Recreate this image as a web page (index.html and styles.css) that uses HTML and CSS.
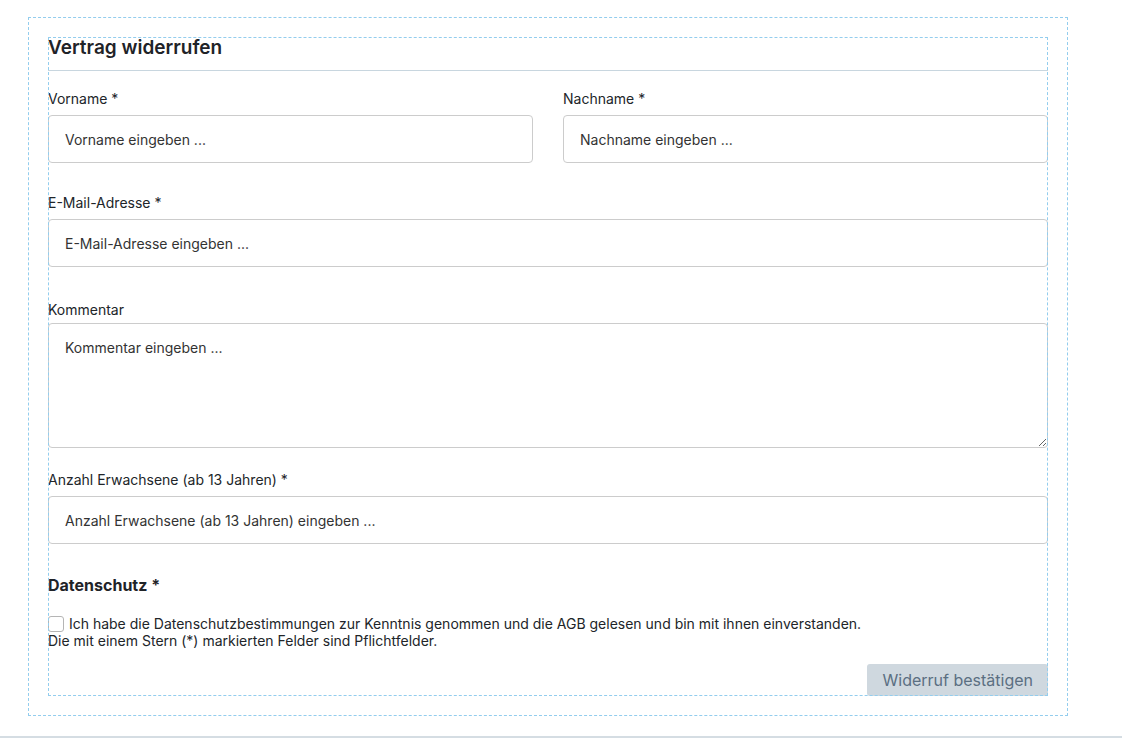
FILE: index.html
```html
<!DOCTYPE html>
<html lang="de">
<head>
<meta charset="utf-8">
<title>Vertrag widerrufen</title>
<link rel="stylesheet" href="styles.css">
</head>
<body>
<div class="outer">
  <form class="card">
    <h2 class="title">Vertrag widerrufen</h2>
    <div class="row">
      <div class="field">
        <label class="label">Vorname *</label>
        <input class="input" type="text" placeholder="Vorname eingeben ...">
      </div>
      <div class="field">
        <label class="label">Nachname *</label>
        <input class="input" type="text" placeholder="Nachname eingeben ...">
      </div>
    </div>
    <div class="field block">
      <label class="label">E-Mail-Adresse *</label>
      <input class="input" type="email" placeholder="E-Mail-Adresse eingeben ...">
    </div>
    <div class="field block comment">
      <label class="label">Kommentar</label>
      <textarea class="textarea" placeholder="Kommentar eingeben ..."></textarea>
    </div>
    <div class="field block adults">
      <label class="label">Anzahl Erwachsene (ab 13 Jahren) *</label>
      <input class="input" type="text" placeholder="Anzahl Erwachsene (ab 13 Jahren) eingeben ...">
    </div>
    <h3 class="subtitle">Datenschutz *</h3>
    <p class="consent"><input class="check" type="checkbox"> Ich habe die Datenschutzbestimmungen zur Kenntnis genommen und die AGB gelesen und bin mit ihnen einverstanden.<br>Die mit einem Stern (*) markierten Felder sind Pflichtfelder.</p>
    <div class="actions">
      <button class="btn" type="button">Widerruf bestätigen</button>
    </div>
  </form>
</div>
<div class="footer"></div>
</body>
</html>
```

FILE: styles.css
```css
* { box-sizing: border-box; }
html, body { margin: 0; padding: 0; }
body {
  font-family: Inter, "Noto Sans", sans-serif;
  color: #212529;
  background: #fff;
  padding-top: 17px;
  height: 738px;
  overflow: hidden;
}
.outer {
  margin-left: 28px;
  width: 1040px;
  padding: 20px;
  outline: 1px dashed #93cdee;
  outline-offset: -1px;
}
.card {
  width: 1000px;
  margin: 0;
  outline: 1px dashed #93cdee;
  outline-offset: -1px;
}
.title {
  margin: 0;
  font-size: 19px;
  font-weight: 600;
  line-height: 22px;
  color: #1f2328;
  padding-bottom: 11px;
  border-bottom: 1px solid #c8d6df;
}
.row {
  display: flex;
  gap: 30px;
  margin-top: 18px;
}
.row .field { flex: 1; }
.field { display: flex; flex-direction: column; }
.block { margin-top: 30px; }
.label {
  font-size: 14px;
  line-height: 20px;
  margin-bottom: 6px;
  color: #212529;
}
.input, .textarea {
  font-family: Inter, "Noto Sans", sans-serif;
  font-size: 14px;
  color: #333;
  border: 1px solid #cccccc;
  border-radius: 4px;
  background: #fff;
  padding: 0 16px;
  margin: 0;
  outline: none;
}
.input { height: 48px; }
.input::placeholder, .textarea::placeholder { color: #333; opacity: 1; }
.comment { margin-top: 33px; }
.comment .label { margin-bottom: 3px; }
.textarea {
  display: block;
  height: 125px;
  padding: 15px 16px;
  line-height: 17px;
  resize: vertical;
}
.adults { margin-top: 22px; }
.adults .label { margin-bottom: 6px; }
.subtitle {
  margin: 31px 0 0;
  font-size: 16px;
  font-weight: 700;
  line-height: 20px;
  color: #1f2328;
}
.consent {
  margin: 20px 0 0;
  font-size: 14px;
  line-height: 17px;
  color: #212529;
}
.check {
  width: 16px;
  height: 16px;
  margin: 0 1px 0 0;
  vertical-align: -3px;
  appearance: none;
  border: 1px solid #b5b5b5;
  border-radius: 3px;
  background: #fff;
}
.actions {
  display: flex;
  justify-content: flex-end;
  margin-top: 15px;
}
.btn {
  font-family: Inter, "Noto Sans", sans-serif;
  font-size: 16px;
  line-height: 20px;
  height: 32px;
  padding: 0 15px;
  white-space: nowrap;
  border: none;
  border-radius: 3px;
  background: #cfd8df;
  color: #5b6f82;
}
.footer {
  margin-top: 20px;
  border-top: 2px solid #d5dde3;
}
```
